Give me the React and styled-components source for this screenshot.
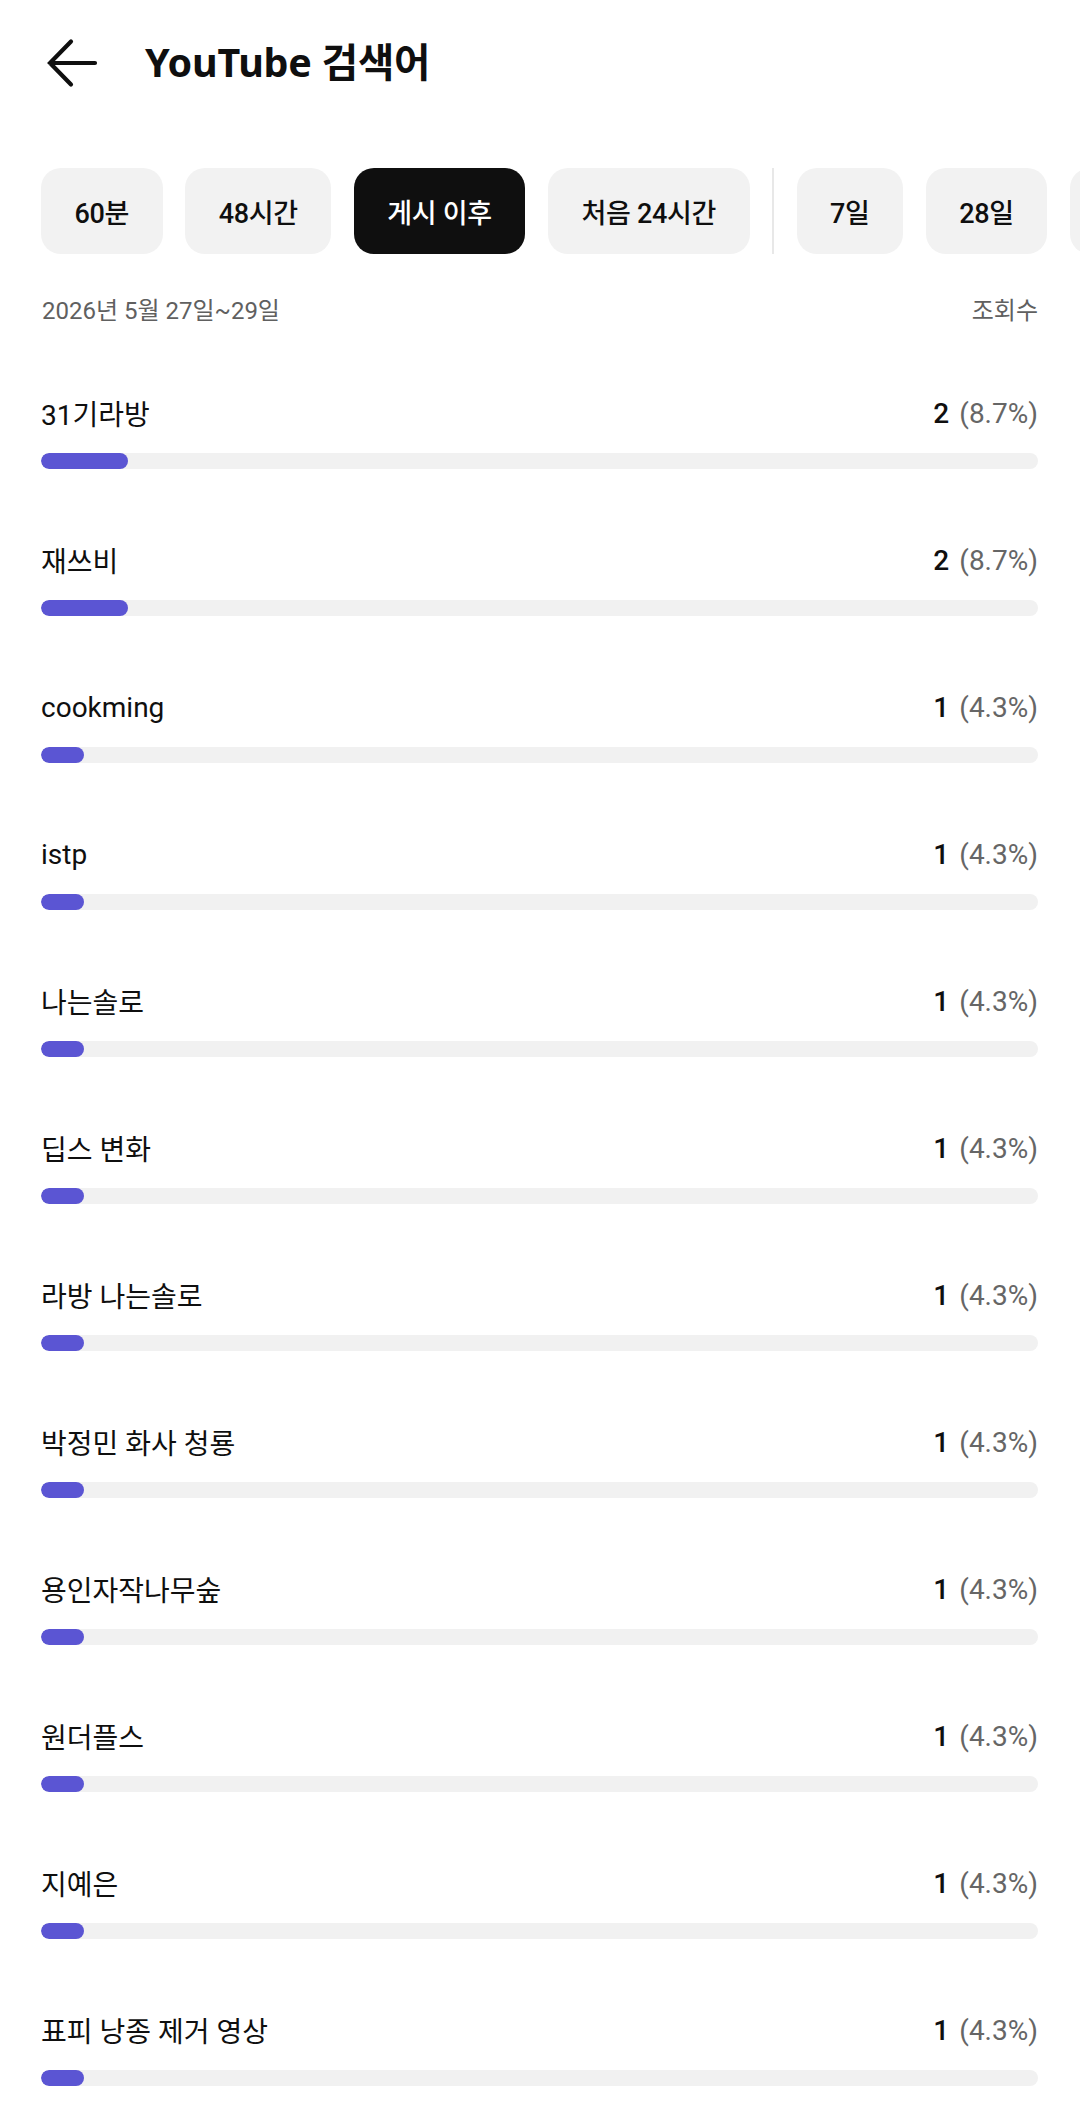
import React from "react";
import styled, { createGlobalStyle } from "styled-components";

const GlobalStyle = createGlobalStyle`
  html, body {
    margin: 0;
    padding: 0;
    background: #ffffff;
  }
  body {
    font-family: Roboto, "Noto Sans CJK KR", "Noto Sans", sans-serif;
    color: #0f0f0f;
    -webkit-font-smoothing: antialiased;
  }
  * { box-sizing: border-box; }
`;

const Page = styled.div`
  width: 1080px;
  min-height: 2109px;
  background: #fff;
  overflow: hidden;
`;

const Header = styled.header`
  height: 126px;
  display: flex;
  align-items: center;
  padding-left: 44px;
`;

const BackButton = styled.button`
  width: 54px;
  height: 54px;
  padding: 0;
  border: 0;
  background: transparent;
  display: flex;
  align-items: center;
  justify-content: center;
  color: #0f0f0f;
  margin-right: 47px;
`;

const Title = styled.h1`
  margin: 0;
  font-family: "Noto Sans", "Noto Sans CJK KR", sans-serif;
  font-weight: 700;
  font-size: 39.5px;
  line-height: 1;
  color: #0f0f0f;
  letter-spacing: -0.2px;
`;

const ChipRow = styled.div`
  margin-top: 42px;
  display: flex;
  align-items: stretch;
  gap: 22.5px;
  padding-left: 41px;
  height: 86px;
  overflow: hidden;
`;

const Chip = styled.button`
  flex-shrink: 0;
  height: 86px;
  padding: 0 33.5px;
  border: 0;
  border-radius: 20px;
  background: ${(p) => (p.$active ? "#0f0f0f" : "#f2f2f2")};
  color: ${(p) => (p.$active ? "#ffffff" : "#0f0f0f")};
  font-family: Roboto, "Noto Sans CJK KR", sans-serif;
  font-size: 27px;
  font-weight: 500;
  letter-spacing: -0.3px;
  white-space: nowrap;
`;

const Divider = styled.div`
  flex-shrink: 0;
  width: 2px;
  background: #e8e8e8;
`;

const MetaRow = styled.div`
  margin-top: 37px;
  padding: 0 42px 0 42px;
  display: flex;
  justify-content: space-between;
  align-items: center;
  height: 34px;
  font-size: 24px;
  color: #606060;
`;

const List = styled.ul`
  list-style: none;
  margin: 68px 0 0;
  padding: 0 42px 0 41px;
  display: flex;
  flex-direction: column;
  gap: 71px;
`;

const Row = styled.li`
  display: flex;
  flex-direction: column;
  gap: 20px;
`;

const RowTop = styled.div`
  height: 40px;
  display: flex;
  justify-content: space-between;
  align-items: center;
  font-size: 28px;
`;

const Label = styled.span`
  color: #0f0f0f;
  font-weight: 400;
`;

const Value = styled.span`
  white-space: nowrap;
`;

const Count = styled.span`
  font-weight: 500;
  color: #0f0f0f;
`;

const Percent = styled.span`
  color: #666666;
  font-weight: 400;
  margin-left: 10px;
`;

const Track = styled.div`
  height: 16px;
  border-radius: 8px;
  background: #f1f1f1;
  overflow: hidden;
`;

const Fill = styled.div`
  height: 100%;
  border-radius: 8px;
  background: #5b55d3;
`;

const chips = [
  { label: "60분" },
  { label: "48시간" },
  { label: "게시 이후", active: true },
  { label: "처음 24시간" },
  { divider: true },
  { label: "7일" },
  { label: "28일" },
  { label: "90일" },
];

const rows = [
  ["31기라방", 2, 8.7],
  ["재쓰비", 2, 8.7],
  ["cookming", 1, 4.3],
  ["istp", 1, 4.3],
  ["나는솔로", 1, 4.3],
  ["딥스 변화", 1, 4.3],
  ["라방 나는솔로", 1, 4.3],
  ["박정민 화사 청룡", 1, 4.3],
  ["용인자작나무숲", 1, 4.3],
  ["원더플스", 1, 4.3],
  ["지예은", 1, 4.3],
  ["표피 낭종 제거 영상", 1, 4.3],
];

const ArrowBack = () => (
  <svg width="54" height="54" viewBox="0 0 54 54" fill="none">
    <path
      d="M51 27H6M27 5.5L6 27L27 48.5"
      stroke="currentColor"
      strokeWidth="4.2"
      strokeLinecap="round"
      strokeLinejoin="miter"
    />
  </svg>
);

export default function App() {
  return (
    <Page>
      <GlobalStyle />
      <Header>
        <BackButton aria-label="뒤로">
          <ArrowBack />
        </BackButton>
        <Title>YouTube 검색어</Title>
      </Header>
      <ChipRow>
        {chips.map((c, i) =>
          c.divider ? (
            <Divider key={i} />
          ) : (
            <Chip key={i} $active={c.active}>
              {c.label}
            </Chip>
          )
        )}
      </ChipRow>
      <MetaRow>
        <span>2026년 5월 27일~29일</span>
        <span>조회수</span>
      </MetaRow>
      <List>
        {rows.map(([label, count, pct]) => (
          <Row key={label}>
            <RowTop>
              <Label>{label}</Label>
              <Value>
                <Count>{count}</Count>
                <Percent>({pct}%)</Percent>
              </Value>
            </RowTop>
            <Track>
              <Fill style={{ width: `${pct}%` }} />
            </Track>
          </Row>
        ))}
      </List>
    </Page>
  );
}
